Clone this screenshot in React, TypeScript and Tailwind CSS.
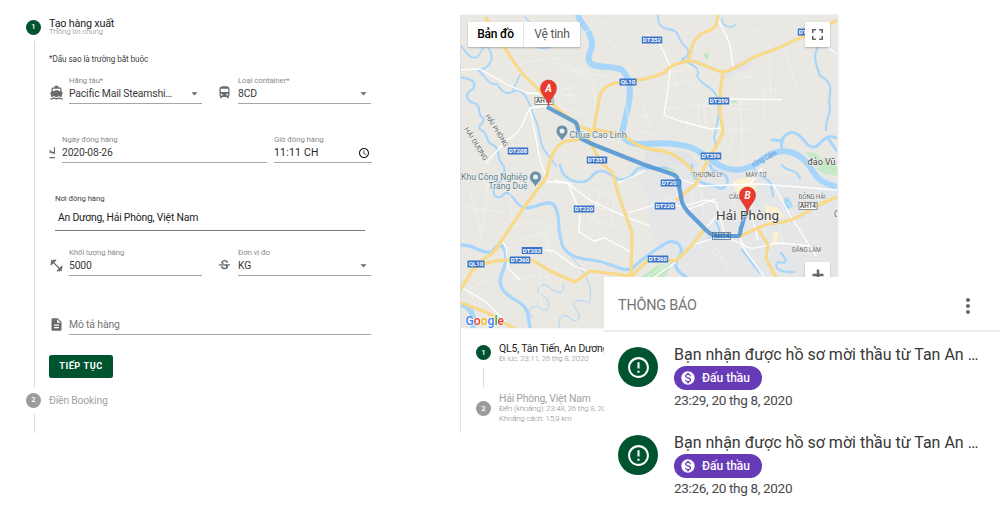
import type { ReactNode } from "react";
import clsx from "clsx";
import {
  MdArrowDropDown,
  MdDescription,
  MdDirectionsBoat,
  MdDirectionsBus,
  MdErrorOutline,
  MdFitnessCenter,
  MdFlightLand,
  MdFullscreen,
  MdAccessTime,
  MdMonetizationOn,
  MdMoreVert,
  MdStrikethroughS,
} from "react-icons/md";

type FieldProps = {
  label: string;
  value: string;
  className: string;
  valueClass?: string;
  trailing?: ReactNode;
};

function Field({ label, value, className, valueClass = "tracking-[-0.18px] text-[#3a3a3a]", trailing }: FieldProps) {
  return (
    <div className={clsx("flex h-[28px] flex-col border-b border-[#a6a6a6]", className)}>
      <span className="h-[10px] whitespace-nowrap text-[7.8px] leading-[10px] tracking-[-0.08px] text-[#8b8b8b]">{label}</span>
      <div className="flex h-[15px] items-center justify-between">
        <span className={clsx("whitespace-nowrap text-[10.4px] leading-[15px]", valueClass)}>{value}</span>
        {trailing}
      </div>
    </div>
  );
}

function StepDot({ n, active }: { n: number; active?: boolean }) {
  return (
    <div
      className={clsx(
        "flex size-[15px] shrink-0 items-center justify-center rounded-full text-[7.8px] font-medium leading-none text-white",
        active ? "bg-[#00532f]" : "bg-[#9b9b9b]",
      )}
    >
      {n}
    </div>
  );
}

const caret = <MdArrowDropDown className="size-[15px] text-[#6b6b6b]" />;

function BookingForm() {
  return (
    <section className="flex w-[460px] shrink-0">
      <div className="flex w-[49px] shrink-0 flex-col pl-[26px] pt-[19.5px]">
        <StepDot n={1} active />
        <div className="ml-[8px] mt-[6.5px] h-[346px] w-px bg-[#dcdcdc]" />
        <div className="mt-[5.5px]">
          <StepDot n={2} />
        </div>
        <div className="ml-[8px] mt-[6px] h-[19px] w-px bg-[#dcdcdc]" />
      </div>
      <div className="flex flex-col items-start pt-[17px]">
        <h1 className="h-[11px] text-[10.8px] font-normal leading-[13px] tracking-[-0.2px] text-[#1c1c1c]">Tạo hàng xuất</h1>
        <p className="h-[8px] text-[7.8px] font-light leading-[8px] tracking-[-0.1px] text-[#858585]">Thông tin chung</p>
        <p className="mt-[18px] h-[10px] text-[8.2px] leading-[10px] tracking-[-0.1px] text-[#3f3f3f]">*Dấu sao là trường bắt buộc</p>

        <div className="mt-[12px] flex">
          <MdDirectionsBoat className="mr-[5px] mt-[9px] size-[15px] text-[#6b6b6b]" />
          <Field label="Hãng tàu*" value="Pacific Mail Steamshi…" className="w-[133px]" trailing={caret} />
          <MdDirectionsBus className="ml-[15px] mr-[6px] mt-[9px] size-[15px] text-[#6b6b6b]" />
          <Field label="Loại container*" value="8CD" className="w-[133px]" trailing={caret} />
        </div>

        <div className="mt-[31px] flex">
          <div className="mr-[7px] mt-[11px] flex h-[14px] w-[6px] overflow-hidden">
            <MdFlightLand className="ml-[-1px] size-[14px] shrink-0 text-[#6b6b6b]" />
          </div>
          <Field label="Ngày đóng hàng" value="2020-08-26" className="w-[205px]" />
          <Field
            label="Giờ đóng hàng"
            value="11:11 CH"
            className="ml-[7px] w-[98px]"
            valueClass="tracking-[0.25px] text-[#222]"
            trailing={<MdAccessTime className="mr-[2px] size-[12px] text-[#111]" />}
          />
        </div>

        <div className="ml-[6px] mt-[31px] flex h-[37px] w-[310px] flex-col border-b border-[#777]">
          <span className="h-[10px] text-[7.8px] leading-[10px] tracking-[-0.1px] text-[#444]">Nơi đóng hàng</span>
          <span className="ml-[3px] mt-[6px] text-[10.4px] leading-[15px] tracking-[-0.2px] text-[#222]">
            An Dương, Hải Phòng, Việt Nam
          </span>
        </div>

        <div className="mt-[17px] flex">
          <MdFitnessCenter className="mr-[5px] mt-[10px] size-[15px] text-[#6b6b6b]" />
          <Field label="Khối lượng hàng" value="5000" className="w-[133px]" />
          <MdStrikethroughS className="ml-[15px] mr-[6px] mt-[10px] size-[15px] text-[#6b6b6b]" />
          <Field label="Đơn vị đo" value="KG" className="w-[133px]" trailing={caret} />
        </div>

        <div className="mt-[38px] flex">
          <MdDescription className="mr-[5px] mt-[3px] size-[15px] text-[#6b6b6b]" />
          <div className="h-[21px] w-[302px] border-b border-[#a6a6a6] pt-[3px] text-[10.4px] leading-[15px] tracking-[-0.15px] text-[#757575]">
            Mô tả hàng
          </div>
        </div>

        <button className="mt-[20px] flex h-[23px] w-[64px] items-center justify-center rounded-[2.5px] bg-[#00532f] text-[9.1px] font-bold tracking-[0.6px] text-white">
          TIẾP TỤC
        </button>
        <p className="mt-[16px] h-[12px] text-[10.4px] leading-[14px] tracking-[-0.2px] text-[#a2a2a2]">Điền Booking</p>
      </div>
    </section>
  );
}

const rivers: { d: string; w: number }[] = [
  { d: "M578 15C580 25 590 28 592 42C593 52 583 58 593 65C604 68 616 66 622 70C630 78 632 90 628 107L622 133C624 142 634 145 645 144C665 142 680 144 690 147C704 152 710 162 725 168C738 172 750 168 758 163C768 154 778 149 790 152C806 156 811 170 818 178C825 185 832 184 838 188", w: 6 },
  { d: "M782 150C779 135 790 130 797 134C805 138 806 148 815 147C822 144 824 133 837 138M772 140L783 141M828 138L836 150", w: 3 },
  { d: "M818 47C812 58 817 66 820 76C834 82 830 92 829 102C833 112 825 118 826 130", w: 2.2 },
  { d: "M658 15C657 24 661 28 668 29C680 31 677 36 682 43C690 50 691 56 682 59C690 64 702 68 697 76C701 86 714 86 717 98C722 110 716 126 714 139C720 148 711 153 705 160", w: 2 },
  { d: "M460 45C466 50 468 60 477 57C484 50 484 40 489 49C495 58 490 69 478 70C486 77 489 86 497 84C504 96 509 94 517 90C530 94 530 110 536 121C541 132 538 145 548 155L556 166", w: 1.8 },
  { d: "M460 77C468 79 478 80 473 89C464 93 466 101 474 103C483 106 476 115 483 118C486 124 475 125 481 130C490 134 484 142 493 145C502 150 495 157 503 165C508 174 501 182 494 188C492 198 500 200 504 194C512 188 514 207 526 208C536 208 546 200 553 204", w: 2.2 },
  { d: "M526 208C536 208 546 200 553 204C561 212 557 228 561 240C563 254 576 259 592 260C612 262 624 275 634 267C646 255 655 250 668 242C680 240 685 250 678 258C670 270 685 275 690 280", w: 3.2 },
  { d: "M460 245C475 244 480 254 492 252C500 240 506 246 506 260C504 272 496 280 503 290C512 302 524 300 528 314L530 328", w: 3.4 },
  { d: "M459 304C470 306 475 314 473 328", w: 5 },
  { d: "M560 165C562 176 570 182 582 182C592 182 592 170 602 171C612 172 615 182 625 179C636 177 634 165 645 168C655 170 660 166 668 168", w: 2.6 },
  { d: "M692 165C690 178 700 184 715 186C724 192 730 184 726 176C720 170 712 174 710 165", w: 3 },
  { d: "M754 168C756 178 768 176 771 184L773 196M782 165C786 172 796 168 800 178M781 253C789 262 786 264 778 262C772 268 782 273 794 272M709 238C720 240 722 232 716 222M742 250L760 273", w: 2.2 },
  { d: "M525 17C533 24 530 32 520 35M534 44C539 51 550 49 556 43M520 75L512 92M736 24C730 30 722 26 722 18", w: 1.6 },
  { d: "M533 318C524 310 534 303 541 308C548 316 553 300 543 296C532 291 542 281 549 287C559 296 566 293 563 284M560 328C556 318 564 312 570 318C577 325 583 317 576 309C569 302 578 298 587 302M572 258C586 273 594 286 589 304", w: 1 },
];

const highways = [
  "M485 17L508 53C516 66 524 77 533 84L549 101C560 112 573 120 580 127L593 131",
  "M838 20L802 37L776 49C758 55 756 56 750 59C740 65 734 70 723 72C709 70 702 61 688 61C676 64 671 64 665 72C650 80 634 80 615 83C604 86 600 92 599 100L594 128C592 137 578 140 567 141C557 143 552 152 549 165L546 178L522 210L502 240C496 252 488 257 476 264C472 271 468 278 459 292",
  "M718 15L716 26C708 34 702 30 697 38C690 45 691 52 688 61",
  "M723 72L720 93L720 113L723 131C719 146 710 153 705 166L696 184L676 200",
  "M593 129L624 135C634 145 645 149 662 151C677 154 686 163 695 174",
  "M588 138L598 157C600 166 612 168 614 176L618 193L626 216L632 233L631 276",
  "M472 270C488 260 498 261 506 260L532 260L552 272L575 282L590 271L632 276L648 260C660 258 666 263 677 260L692 245L706 227",
  "M459 302L488 313L517 330",
  "M738 237C756 230 762 224 774 223C798 222 806 210 825 202L838 197",
  "M757 227L768 245L766 258L776 278",
];

const roads = [
  "M460 70L480 69L508 85L527 93L546 94",
  "M546 106L530 108C522 122 524 130 507 140L486 163",
  "M718 20L727 37L730 45L733 66",
  "M645 33L660 44L670 66L669 82L664 115L680 121L710 129L722 128",
  "M726 99L782 99.500",
  "M530 108L540 160L548 182L568 183L577 205L580 215L579 232L594 241L605 238L631 252",
  "M566 182L590 200L624 216L650 226",
  "M554 180L572 184M618 183L645 171M627 213L665 202L690 209L715 199",
  "M545 250L554 251L574 266L590 272",
  "M502 240L506 248L508 268L520 280",
  "M463 288L486 302L510 326",
  "M676 178L700 186L760 184L837 190",
  "M690 246L720 236L740 243L752 260L765 278",
  "M740 238C745 256 760 245 780 243L810 246",
  "M750 184L762 168M773 184L790 215L816 256",
  "M684 206L705 200L716 202L725 236M720 212L690 246M751 213L758 240",
  "M650 280L676 262M815 38L837 54",
];

const lanes = [
  "M498 82L524 62L560 58L588 80M540 49L572 71L612 77M556 82L560 108L588 116",
  "M468 20L490 40L520 44L570 39L610 20M600 35L640 66M621 23L645 53",
  "M560 90L580 85L586 99L570 103ZM562 68L590 70M562 95L581 96M570 86L570 103",
  "M670 73L689 68L700 84L681 92ZM670 84L694 81M680 68L691 87M684 64L704 73",
  "M664 107L684 108L688 130M670 98L682 104M690 105L716 107M698 99L699 128M704 104L706 127",
  "M728 84L750 76L757 85M731 70L752 78M745 75L750 69M769 43L771 98M784 44L797 91M748 29L763 33",
  "M764 89L782 90M764 89L763 123L756 130L726 129M735 104L747 105M731 109L753 109M741 99L742 165M735 130L728 151",
  "M470 189L486 184L510 189L511 221L480 230ZM462 207L505 212M488 186L480 245",
  "M512 225L540 222L556 235M517 240L550 232M545 227L548 250M535 231L550 242",
  "M590 190L614 195L612 226L588 219ZM600 194L590 227M586 205L614 212",
  "M490 278L470 289L479 320M510 280L540 275L541 308M550 252L559 267L545 278",
  "M626 103L630 129L660 136M638 118L655 114M643 100L649 127M594 78L595 112",
  "M668 211L680 190M653 193L670 183L680 198M651 204L674 196",
  "M692 188L690 226M700 183L704 216M725 180L744 230M736 183L754 209",
  "M780 203L791 227L812 217M788 202L805 236M761 217L770 258M775 216L786 250M795 194L819 217",
  "M648 277L675 258M660 271L688 248M700 247L723 259M714 244L729 270",
];

type Shield = { x: number; y: number; t: string; w?: number };

const blueShields: Shield[] = [
  { x: 652, y: 40, t: "DT352" },
  { x: 628, y: 82, t: "QL10", w: 17 },
  { x: 719, y: 101, t: "DT359" },
  { x: 711, y: 156, t: "DT359" },
  { x: 808, y: 32, t: "DT359" },
  { x: 518, y: 151, t: "DT208" },
  { x: 597, y: 160, t: "DT351" },
  { x: 584, y: 209, t: "DT220" },
  { x: 665, y: 206, t: "DT220" },
  { x: 671, y: 183, t: "DT208" },
  { x: 532, y: 250.500, t: "DT203" },
  { x: 520, y: 260, t: "DT360" },
  { x: 476, y: 264, t: "QL10", w: 17 },
  { x: 658, y: 259, t: "DT360" },
];

const plainShields: Shield[] = [
  { x: 544, y: 101, t: "AH14" },
  { x: 808, y: 206, t: "AH14" },
];

function Pin({ x, y, letter }: { x: number; y: number; letter: string }) {
  return (
    <g transform={`translate(${x} ${y})`}>
      <path
        d="M0 0C-1 -8 -8 -11 -8 -18A8 8 0 0 1 8 -18C8 -11 1 -8 0 0Z"
        fill="#ea3a30"
        stroke="#c32a25"
        strokeWidth=".5"
      />
      <text y="-14" textAnchor="middle" fontSize="10" fontWeight="700" fontStyle="italic" fill="#fff">
        {letter}
      </text>
    </g>
  );
}

function Poi({ x, y }: { x: number; y: number }) {
  return (
    <g transform={`translate(${x} ${y})`}>
      <path
        d="M0 9C-1 4 -6 3 -6 -2A6 6 0 0 1 6 -2C6 3 1 4 0 9Z"
        fill="#6c93a3"
        stroke="#fff"
        strokeWidth=".6"
      />
      <circle cy="-2" r="2.500" fill="#e9f0f2" />
    </g>
  );
}

function RouteMap() {
  return (
    <svg viewBox="461 15 376 313" className="block h-[313px] w-[376px]" fontFamily="Roboto, sans-serif">
      <rect x="460" y="15" width="377" height="313" fill="#e9e8e3" />
      <path d="M628 165L838 178V280H684L655 248L645 190Z" fill="#e5e6e8" />
      <path d="M730 66L756 56L748 68L722 80ZM645 146L690 154L700 166L645 165Z" fill="#e2e3e6" />
      <g fill="#c5e8c5">
        <path d="M703 53L709 53L708 60L705 59Z" />
        <path d="M732 101L737 99V103H731Z" />
        <path d="M806 152L815 153L822 160L830 158L838 168V174L815 166Z" />
        <path d="M640 278L656 266L673 262L664 280Z" />
        <path d="M783 200L792 201L792 209L785 209Z" />
        <path d="M662 165L676 170L667 173Z" />
        <path d="M816 168L832 168L838 176L824 174Z" />
      </g>
      <path d="M733 181L752 176L757 190L745 201L735 190ZM765 205L778 208L784 216L768 226ZM773 232L779 232L777 245L772 243Z" fill="#fbf0d0" />
      <g fill="none" stroke="#a8d6fb" strokeLinejoin="round" strokeLinecap="round">
        {rivers.map((r) => (
          <path key={r.d} d={r.d} strokeWidth={r.w} />
        ))}
      </g>
      <path d="M784 198L788 197L793 207L786 209Z" fill="#a8d6fb" />
      <g fill="none" stroke="#f5f5f2" strokeWidth=".6">
        {lanes.map((d) => (
          <path key={d} d={d} />
        ))}
      </g>
      <g fill="none" stroke="#ffffff" strokeWidth="1.300" strokeLinejoin="round">
        {roads.map((d) => (
          <path key={d} d={d} />
        ))}
      </g>
      <g fill="none" strokeLinejoin="round">
        {highways.map((d) => (
          <path key={d} d={d} stroke="#f0d38c" strokeWidth="3" />
        ))}
        {highways.map((d) => (
          <path key={`${d}-core`} d={d} stroke="#fcdb82" strokeWidth="2" />
        ))}
      </g>
      {blueShields.map(({ x, y, t, w = 20.5 }) => (
        <g key={`${t}-${x}`}>
          <rect x={x - w / 2} y={y - 3.5} width={w} height="7" rx=".5" fill="#3b74c8" />
          <text x={x} y={y + 2.2} textAnchor="middle" fontSize="6.2" fontWeight="700" fill="#fff">
            {t}
          </text>
        </g>
      ))}
      {plainShields.map(({ x, y, t }) => (
        <g key={`${t}-${x}`}>
          <rect x={x - 9} y={y - 3.5} width="18" height="7" fill="#fff" stroke="#777" strokeWidth=".8" />
          <text x={x} y={y + 2.3} textAnchor="middle" fontSize="6.4" fontWeight="500" fill="#444">
            {t}
          </text>
        </g>
      ))}
      <path
        d="M547 107L575 122C579 125 577 132 580 137C582 140 590 143 597 146L645 165L672 174C678 176 678 179 679 186L682 202C683 206 685 208 688 212L706 230C711 235 714 236 720 236L737 236C741 236 740 232 741 228C744 223 741 219 748 212"
        fill="none"
        stroke="#438fd2"
        strokeOpacity=".82"
        strokeWidth="4.200"
        strokeLinejoin="round"
      />
      <g>
        <rect x="712.500" y="232.500" width="18" height="7" fill="none" stroke="#55728f" strokeWidth=".8" />
        <text x="721.500" y="238.300" textAnchor="middle" fontSize="6.400" fontWeight="500" fill="#2f5f92">
          AH14
        </text>
      </g>
      <g fill="#5d6468" stroke="#f3f3f0" strokeWidth="1.200" paintOrder="stroke" fontSize="6.800">
        <g fill="#5b7f91" fontSize="9.600">
          <text x="569.500" y="138" textLength="57" lengthAdjust="spacingAndGlyphs">Chùa Cao Linh</text>
          <text x="461" y="179.500" textLength="66.500" lengthAdjust="spacingAndGlyphs">Khu Công Nghiệp</text>
          <text x="488.500" y="188.500" textLength="39" lengthAdjust="spacingAndGlyphs">Tràng Duệ</text>
        </g>
        <text transform="translate(485 116) rotate(58)" textLength="37" lengthAdjust="spacingAndGlyphs">HẢI PHÒNG</text>
        <text transform="translate(464 129) rotate(58)" textLength="38" lengthAdjust="spacingAndGlyphs">HẢI DƯƠNG</text>
        <text x="692.500" y="177" textLength="30" lengthAdjust="spacingAndGlyphs">THƯỢNG LÝ</text>
        <text x="745.500" y="176.500" textLength="21" lengthAdjust="spacingAndGlyphs">MÁY TƠ</text>
        <text x="729" y="198.500" textLength="12" lengthAdjust="spacingAndGlyphs">CẦU</text>
        <text x="798.500" y="198.500" textLength="27" lengthAdjust="spacingAndGlyphs">ĐÔNG HẢI</text>
        <text x="792" y="252" textLength="29" lengthAdjust="spacingAndGlyphs">ĐẰNG LÂM</text>
        <text x="807.500" y="165" fontSize="9.200" fill="#444" textLength="28" lengthAdjust="spacingAndGlyphs">đảo Vũ</text>
        <text x="834" y="217" fontSize="8.500">C</text>
        <text x="716" y="220" fontSize="13.400" fill="#3f4346" textLength="63">Hải Phòng</text>
      </g>
      <text transform="translate(753 167) rotate(-27)" fontSize="7.400" fill="#5c95cf" textLength="27" lengthAdjust="spacingAndGlyphs">
        sông Cấm
      </text>
      <Poi x={562} y={133} />
      <Poi x={535.5} y={179} />
      <Pin x={548.5} y={106} letter="A" />
      <Pin x={747.5} y={213} letter="B" />
      <text
        x="465.500"
        y="324.500"
        fontSize="13.400"
        fontWeight="500"
        stroke="#fff"
        strokeWidth="1.200"
        paintOrder="stroke"
        textLength="38.500"
        lengthAdjust="spacingAndGlyphs"
      >
        <tspan fill="#4285f4">G</tspan>
        <tspan fill="#ea4335">o</tspan>
        <tspan fill="#f2b305">o</tspan>
        <tspan fill="#4285f4">g</tspan>
        <tspan fill="#34a853">l</tspan>
        <tspan fill="#ea4335">e</tspan>
      </text>
    </svg>
  );
}

function RoutePanel() {
  return (
    <section className="mt-[15px] flex h-[418px] w-[377px] flex-col border-l border-[#e0e0e0]">
      <div className="relative shrink-0 shadow-[1px_0_2px_rgba(0,0,0,0.12)]">
        <RouteMap />
        <div className="absolute left-[7px] top-[7px] flex h-[25px] rounded-[1px] bg-white text-[12px] leading-[25px] shadow-[0_1px_2px_rgba(0,0,0,0.25)]">
          <span className="w-[56px] border-r border-[#e6e6e6] text-center font-medium tracking-[-0.2px] text-black">Bản đồ</span>
          <span className="w-[56px] text-center tracking-[-0.2px] text-[#565656]">Vệ tinh</span>
        </div>
        <div className="absolute right-[7px] top-[7px] flex size-[25px] items-center justify-center rounded-[1px] bg-white shadow-[0_1px_2px_rgba(0,0,0,0.25)]">
          <MdFullscreen className="size-[19px] text-[#666]" />
        </div>
        <div className="absolute right-[7px] top-[247px] flex size-[25px] items-center justify-center rounded-[1px] bg-white shadow-[0_1px_2px_rgba(0,0,0,0.25)]">
          <svg viewBox="0 0 12 12" className="size-[12px]">
            <path d="M4.750 .5H7.250V4.750H11.500V7.250H7.250V11.500H4.750V7.250H.5V4.750H4.750Z" fill="#666" />
          </svg>
        </div>
      </div>
      <div className="flex pl-[15px]">
        <div className="flex w-[23px] flex-col pt-[17px]">
          <StepDot n={1} active />
          <div className="ml-[7px] mt-[8px] h-[20px] w-px bg-[#dcdcdc]" />
          <div className="mt-[13px]">
            <StepDot n={2} />
          </div>
        </div>
        <div className="flex flex-col whitespace-nowrap pt-[14px] text-[7.800px] font-light leading-[10px] tracking-[-0.14px] text-[#8a8a8a]">
          <p className="h-[12px] text-[10.4px] font-normal leading-[13px] tracking-[-0.15px] text-[#1c1c1c]">
            QL5, Tân Tiến, An Dương, Hải Phòng
          </p>
          <p>Đi lúc: 23:11, 26 thg 8, 2020</p>
          <p className="mt-[28px] h-[12px] text-[10.4px] font-normal leading-[13px] tracking-[-0.2px] text-[#a2a2a2]">Hải Phòng, Việt Nam</p>
          <p>Đến (khoảng): 23:48, 26 thg 8, 2020</p>
          <p>Khoảng cách: 15,9 km</p>
        </div>
      </div>
    </section>
  );
}

function NotificationItem({ time }: { time: string }) {
  return (
    <li className="flex h-[88px] pl-[14px] pt-[12px]">
      <div className="mt-[3px] flex size-[40px] shrink-0 items-center justify-center rounded-full bg-[#00532f]">
        <MdErrorOutline className="size-[25px] text-white" />
      </div>
      <div className="ml-[16px] flex flex-col items-start whitespace-nowrap">
        <p className="h-[22px] text-[16px] leading-[21px] text-[#383838]">Bạn nhận được hồ sơ mời thầu từ Tan An …</p>
        <div className="flex h-[24px] w-[88px] items-center rounded-full bg-[#673ab7] pl-[6px] text-[12px] font-medium text-white">
          <MdMonetizationOn className="mr-[6px] size-[16px]" />
          Đấu thầu
        </div>
        <p className="h-[20px] text-[13.500px] leading-[20px] tracking-[-0.32px] text-[#484848]">{time}</p>
      </div>
    </li>
  );
}

function Notifications() {
  return (
    <aside className="absolute left-[604px] top-[277px] h-[244px] w-[396px] bg-white">
      <header className="flex h-[55px] items-center justify-between border-b-2 border-[#ececec] pl-[14px] pr-[20px] pt-[5px]">
        <h2 className="text-[14.400px] font-normal tracking-[-0.2px] text-[#747474]">THÔNG BÁO</h2>
        <MdMoreVert className="size-[24px] text-[#666]" />
      </header>
      <ul>
        <NotificationItem time="23:29, 20 thg 8, 2020" />
        <NotificationItem time="23:26, 20 thg 8, 2020" />
      </ul>
    </aside>
  );
}

export default function App() {
  return (
    <main className="relative flex h-[521px] w-[1000px] items-start overflow-hidden bg-white font-['Roboto',sans-serif]">
      <BookingForm />
      <RoutePanel />
      <Notifications />
    </main>
  );
}
